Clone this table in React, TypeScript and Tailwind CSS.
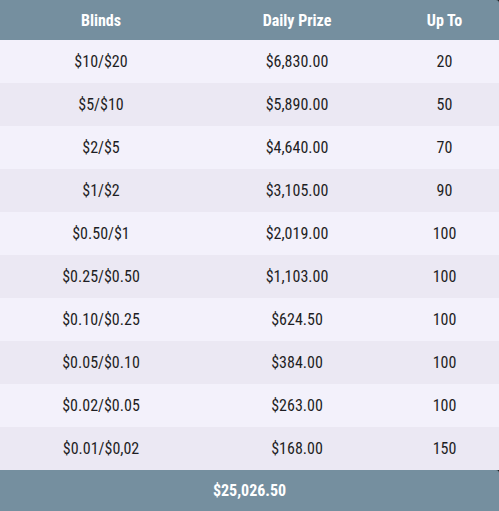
const rows = [
  ["$10/$20", "$6,830.00", "20"],
  ["$5/$10", "$5,890.00", "50"],
  ["$2/$5", "$4,640.00", "70"],
  ["$1/$2", "$3,105.00", "90"],
  ["$0.50/$1", "$2,019.00", "100"],
  ["$0.25/$0.50", "$1,103.00", "100"],
  ["$0.10/$0.25", "$624.50", "100"],
  ["$0.05/$0.10", "$384.00", "100"],
  ["$0.02/$0.05", "$263.00", "100"],
  ["$0.01/$0,02", "$168.00", "150"],
];

export default function App() {
  return (
    <div
      className="w-[499px] h-[511px] bg-[#1c1c1c] flex flex-col font-stretch-condensed"
      style={{ fontFamily: "'Roboto Condensed', Roboto, 'Liberation Sans Narrow', sans-serif" }}
    >
      <div className="grid grid-cols-[202px_190px_1fr] h-[40px] pt-[1px] items-center bg-[#758f9f] rounded-tr-[3px] text-white font-bold text-[16px]">
        <div className="text-center">Blinds</div>
        <div className="text-center">Daily Prize</div>
        <div className="text-center pr-[2px]">Up To</div>
      </div>
      {rows.map((r, i) => (
        <div
          key={i}
          className={
            "grid grid-cols-[202px_190px_1fr] h-[43px] pt-[1px] items-center text-[16px] text-[#1e1e24] " +
            (i % 2 === 0 ? "bg-[#f3f1fb]" : "bg-[#ebe8f3]")
          }
        >
          <div className="text-center">{r[0]}</div>
          <div className="text-center">{r[1]}</div>
          <div className="text-center pr-[2px]">{r[2]}</div>
        </div>
      ))}
      <div className="h-[41px] pt-[1px] flex items-center justify-center bg-[#758f9f] rounded-tr-[3px] text-white font-bold text-[16px]">
        $25,026.50
      </div>
    </div>
  );
}
